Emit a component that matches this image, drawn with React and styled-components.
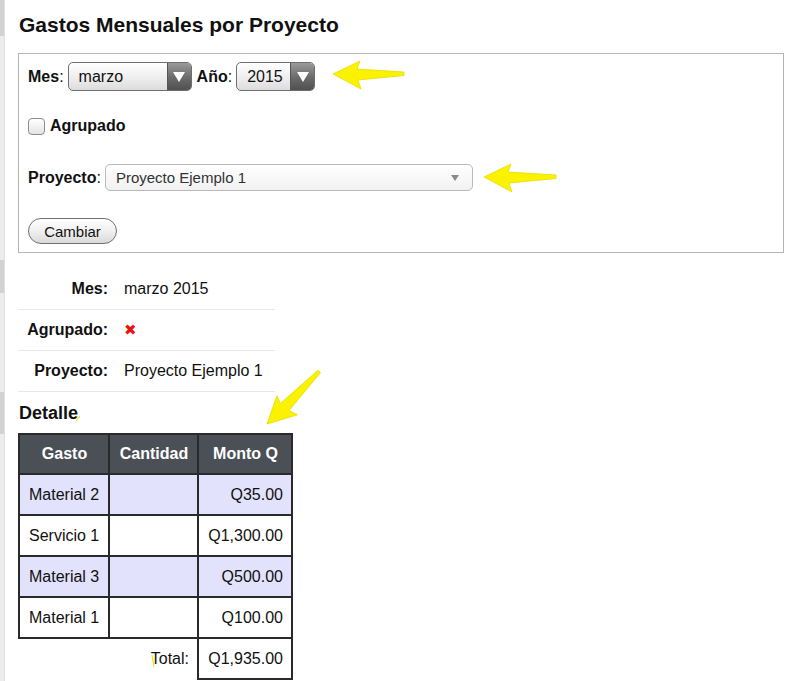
import React from 'react'
import styled, { createGlobalStyle } from 'styled-components'

const GlobalStyle = createGlobalStyle`
    html, body {
        margin: 0;
        padding: 0;
        background: #ffffff;
    }
    body {
        font-family: "Liberation Sans", Arial, Helvetica, sans-serif;
        color: #111;
    }
`

const Page = styled.div`
    position: relative;
    display: flex;
    min-height: 681px;
    width: 800px;
    overflow: hidden;
`

const Strip = styled.div`
    width: 4px;
    display: flex;
    flex-direction: column;
    background: #ececec;
    border-right: 1px solid #e2e2e2;
`

const StripSeg = styled.div`
    height: ${(p) => (p.$h ? `${p.$h}px` : 'auto')};
    flex: ${(p) => (p.$h ? '0 0 auto' : '1')};
    background: ${(p) => (p.$dark ? '#d2d2d2' : 'transparent')};
`

const Main = styled.div`
    flex: 1;
    padding: 13px 16px 0 13px;
`

const Title = styled.h1`
    margin: 0 0 16px 1px;
    font-size: 21px;
    line-height: 24px;
    font-weight: bold;
`

const FormBox = styled.div`
    border: 1px solid #b4b4b4;
    padding: 8px 9px 8px 9px;
    display: flex;
    flex-direction: column;
`

const FieldRow = styled.div`
    display: flex;
    align-items: center;
    margin-top: ${(p) => p.$mt || 0}px;
    font-size: 16px;
`

const Label = styled.span`
    font-weight: bold;
    margin-right: 4px;
    margin-left: ${(p) => p.$ml || 0}px;

    & > span {
        font-weight: normal;
    }
`

const MacSelect = styled.div`
    display: flex;
    width: ${(p) => p.$w}px;
    height: 29px;
    box-sizing: border-box;
    border: 1px solid #6e6e6e;
    border-radius: 5px;
    overflow: hidden;
    background: linear-gradient(#ffffff, #ececec 60%, #dcdcdc);
`

const MacValue = styled.div`
    flex: 1;
    display: flex;
    align-items: center;
    padding-left: 10px;
    font-size: 16px;
    color: #111;
`

const MacArrow = styled.div`
    width: 23px;
    display: flex;
    align-items: center;
    justify-content: center;
    border-left: 1px solid #555;
    background: linear-gradient(#9a9a9a, #6a6a6a 55%, #505050);

    &::after {
        content: '';
        border-left: 6px solid transparent;
        border-right: 6px solid transparent;
        border-top: 10px solid #ffffff;
    }
`

const FlatSelect = styled.div`
    display: flex;
    align-items: center;
    justify-content: space-between;
    width: 368px;
    height: 27px;
    box-sizing: border-box;
    padding: 0 13px 0 10px;
    border: 1px solid #b9b9b9;
    border-radius: 5px;
    background: linear-gradient(#ffffff, #f1f1f1);
    font-size: 15px;
    color: #333;

    &::after {
        content: '';
        border-left: 4px solid transparent;
        border-right: 4px solid transparent;
        border-top: 6px solid #8a8a8a;
    }
`

const CheckBox = styled.span`
    width: 17px;
    height: 17px;
    box-sizing: border-box;
    border: 1px solid #8c8c8c;
    border-radius: 4px;
    background: linear-gradient(#ffffff, #e4e4e4);
    margin-right: 5px;
`

const Button = styled.button`
    width: 89px;
    height: 26px;
    padding: 0;
    border: 1px solid #707070;
    border-radius: 13px;
    background: linear-gradient(#ffffff, #f0f0f0 50%, #d9d9d9);
    font-family: "Liberation Sans", Arial, sans-serif;
    font-size: 15px;
    color: #111;
`

const Info = styled.div`
    width: 257px;
    margin-top: 16px;
`

const InfoRow = styled.div`
    display: grid;
    grid-template-columns: 90px 1fr;
    column-gap: 16px;
    align-items: center;
    height: 40px;
    border-bottom: 1px solid #e8e8e8;
    font-size: 16px;
`

const InfoLabel = styled.div`
    text-align: right;
    font-weight: bold;
`

const Cross = styled.span`
    color: #ee1111;
    font-family: "DejaVu Sans", sans-serif;
    font-size: 15px;
`

const SubTitle = styled.h2`
    margin: 9px 0 8px 1px;
    font-size: 18px;
    line-height: 24px;
    font-weight: bold;
`

const Table = styled.table`
    border-collapse: collapse;
    font-size: 16px;

    td, th {
        box-sizing: border-box;
        padding: 0 8px 0 9px;
    }
    th {
        height: 40px;
    }
    td {
        height: 41px;
    }
`

const Th = styled.th`
    width: ${(p) => p.$w}px;
    background: #4b5056;
    color: #ffffff;
    border: 2px solid #2a2a2a;
    text-align: center;
    font-weight: bold;
`

const Tr = styled.tr`
    background: ${(p) => (p.$odd ? '#e2e2fc' : '#ffffff')};
`

const Td = styled.td`
    border: 2px solid #2a2a2a;
    text-align: ${(p) => (p.$right ? 'right' : 'left')};
`

const TotalLabel = styled.td`
    text-align: right;
`

const Overlay = styled.svg`
    position: absolute;
    left: 0;
    top: 0;
    pointer-events: none;
`

const gastos = [
    { nombre: 'Material 2', monto: 'Q35.00' },
    { nombre: 'Servicio 1', monto: 'Q1,300.00' },
    { nombre: 'Material 3', monto: 'Q500.00' },
    { nombre: 'Material 1', monto: 'Q100.00' },
]

function Arrow({ x, y, len, rotate = 0 }) {
    const pts = [
        [x, y],
        [x + 27, y - 13],
        [x + 24, y - 5],
        [x + len, y - 2],
        [x + len, y + 1.5],
        [x + 25, y + 6],
        [x + 28, y + 15],
    ]
    return (
        <polygon
            points={pts.map((p) => p.join(',')).join(' ')}
            fill="#fbf200"
            stroke="#e8dc00"
            strokeWidth="0.8"
            strokeLinejoin="round"
            transform={`rotate(${rotate} ${x} ${y})`}
        />
    )
}

export default function App() {
    return (
        <Page>
            <GlobalStyle />
            <Strip>
                <StripSeg $h={36} $dark />
                <StripSeg $h={224} />
                <StripSeg $h={33} $dark />
                <StripSeg $h={99} />
                <StripSeg $h={42} $dark />
                <StripSeg />
            </Strip>
            <Main>
                <Title>Gastos Mensuales por Proyecto</Title>
                <FormBox>
                    <FieldRow>
                        <Label>Mes<span>:</span></Label>
                        <MacSelect $w={124}>
                            <MacValue>marzo</MacValue>
                            <MacArrow />
                        </MacSelect>
                        <Label $ml={5}>Año<span>:</span></Label>
                        <MacSelect $w={79}>
                            <MacValue>2015</MacValue>
                            <MacArrow />
                        </MacSelect>
                    </FieldRow>
                    <FieldRow $mt={26}>
                        <CheckBox />
                        <Label>Agrupado</Label>
                    </FieldRow>
                    <FieldRow $mt={29}>
                        <Label>Proyecto<span>:</span></Label>
                        <FlatSelect>Proyecto Ejemplo 1</FlatSelect>
                    </FieldRow>
                    <FieldRow $mt={27}>
                        <Button>Cambiar</Button>
                    </FieldRow>
                </FormBox>

                <Info>
                    <InfoRow>
                        <InfoLabel>Mes:</InfoLabel>
                        <div>marzo 2015</div>
                    </InfoRow>
                    <InfoRow>
                        <InfoLabel>Agrupado:</InfoLabel>
                        <div><Cross>✖</Cross></div>
                    </InfoRow>
                    <InfoRow>
                        <InfoLabel>Proyecto:</InfoLabel>
                        <div>Proyecto Ejemplo 1</div>
                    </InfoRow>
                </Info>

                <SubTitle>Detalle</SubTitle>
                <Table>
                    <thead>
                        <tr>
                            <Th $w={90}>Gasto</Th>
                            <Th $w={89}>Cantidad</Th>
                            <Th $w={94}>Monto Q</Th>
                        </tr>
                    </thead>
                    <tbody>
                        {gastos.map((g, i) => (
                            <Tr key={g.nombre} $odd={i % 2 === 0}>
                                <Td>{g.nombre}</Td>
                                <Td />
                                <Td $right>{g.monto}</Td>
                            </Tr>
                        ))}
                        <tr>
                            <TotalLabel colSpan={2}>Total:</TotalLabel>
                            <Td $right>Q1,935.00</Td>
                        </tr>
                    </tbody>
                </Table>
            </Main>

            <Overlay width="800" height="681" viewBox="0 0 800 681">
                <Arrow x={333} y={74} len={71} />
                <Arrow x={484} y={177} len={72} />
                <Arrow x={267} y={424} len={74} rotate={-45} />
                <line x1="76" y1="421" x2="80" y2="416" stroke="#f0e400" strokeWidth="1.2" />
                <line x1="152" y1="655" x2="154" y2="667" stroke="#f0e400" strokeWidth="1.2" />
            </Overlay>
        </Page>
    )
}
